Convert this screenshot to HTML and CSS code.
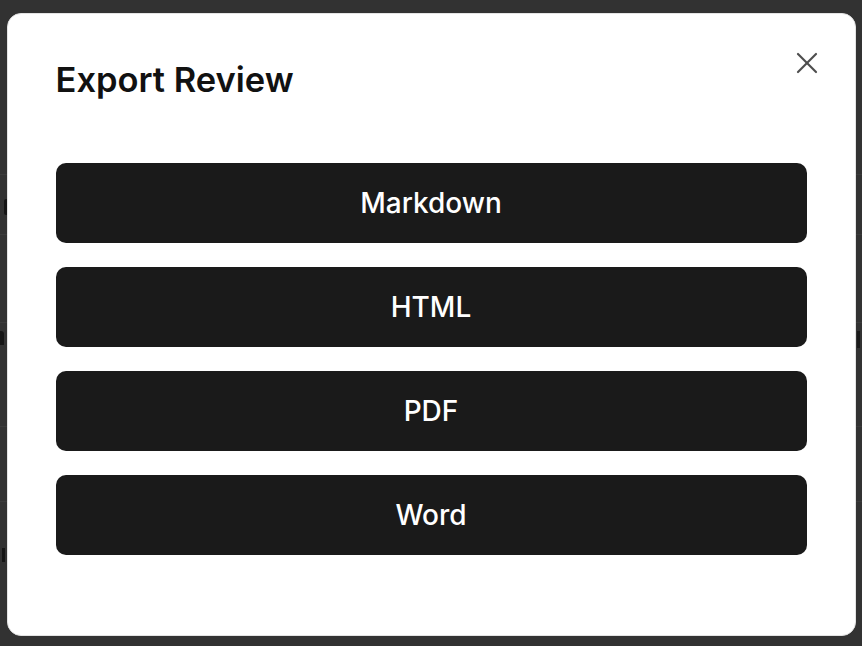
FILE: index.html
```html
<!DOCTYPE html>
<html lang="en">
<head>
<meta charset="utf-8">
<title>Export Review</title>
<link rel="stylesheet" href="styles.css">
</head>
<body>
<div class="backdrop">
  <div class="row r1"></div>
  <div class="row r2"><span class="frag frag-a"></span></div>
  <div class="row r3"></div>
  <div class="row r4"><span class="frag frag-b"></span><span class="frag frag-c"></span></div>
  <div class="row r5"></div>
  <div class="row r6"><span class="frag frag-d"></span></div>
</div>
<div class="overlay">
  <div class="modal" role="dialog" aria-labelledby="title">
    <button class="close" aria-label="Close">
      <svg width="32" height="32" viewBox="0 0 32 32" fill="none" stroke="currentColor" stroke-width="2.2" stroke-linecap="round">
        <path d="M7 7 L25 25"/>
        <path d="M25 7 L7 25"/>
      </svg>
    </button>
    <h1 id="title" class="title">Export Review</h1>
    <div class="options">
      <button class="option">Markdown</button>
      <button class="option">HTML</button>
      <button class="option">PDF</button>
      <button class="option">Word</button>
    </div>
  </div>
</div>
</body>
</html>
```
FILE: styles.css
```css
* { box-sizing: border-box; }
html, body { margin: 0; padding: 0; }
body {
  width: 862px;
  height: 646px;
  overflow: hidden;
  background: #323232;
  font-family: Inter, "Noto Sans", "Liberation Sans", sans-serif;
}
.backdrop { display: flex; flex-direction: column; height: 646px; }
.row {
  border-bottom: 1px solid #3b3b3b;
  display: flex;
  justify-content: space-between;
  align-items: flex-start;
}
.r1 { height: 175px; }
.r2 { height: 60px; padding-top: 24px; }
.r3 { height: 88px; }
.r4 { height: 104px; padding-top: 8px; }
.r5 { height: 75px; }
.r6 { flex: 1; border-bottom: none; padding-top: 46px; }
.frag { display: block; background: #151515; }
.frag-a { width: 3px; height: 16px; margin-left: 4px; border-radius: 2px 0 0 2px; }
.frag-b { width: 4px; height: 14px; border-radius: 0 3px 0 0; }
.frag-c { width: 3px; height: 17px; margin-right: 2px; background: #1a1a1a; }
.frag-d { width: 3px; height: 14px; margin-left: 2px; }
.overlay {
  position: fixed;
  inset: 0;
  display: flex;
  justify-content: center;
  align-items: flex-start;
  padding-top: 13px;
}
.modal {
  position: relative;
  width: 849px;
  height: 623px;
  background: #ffffff;
  border: 1px solid #e3e3e3;
  border-radius: 14px;
  padding: 48px;
  display: flex;
  flex-direction: column;
}
.close {
  position: absolute;
  top: 33px;
  right: 32px;
  width: 32px;
  height: 32px;
  padding: 0;
  border: none;
  background: transparent;
  color: #4d4d4d;
  cursor: pointer;
}
.close svg { display: block; }
.title {
  margin: 0;
  font-size: 34.5px;
  line-height: 36px;
  font-weight: 600;
  color: #111111;
}
.options {
  margin-top: 65px;
  display: flex;
  flex-direction: column;
  gap: 24px;
}
.option {
  height: 80px;
  width: 100%;
  border: none;
  border-radius: 10px;
  background: #1a1a1a;
  color: #ffffff;
  font-family: Inter, "Noto Sans", "Liberation Sans", sans-serif;
  font-size: 28px;
  font-weight: 450;
  cursor: pointer;
}
```
